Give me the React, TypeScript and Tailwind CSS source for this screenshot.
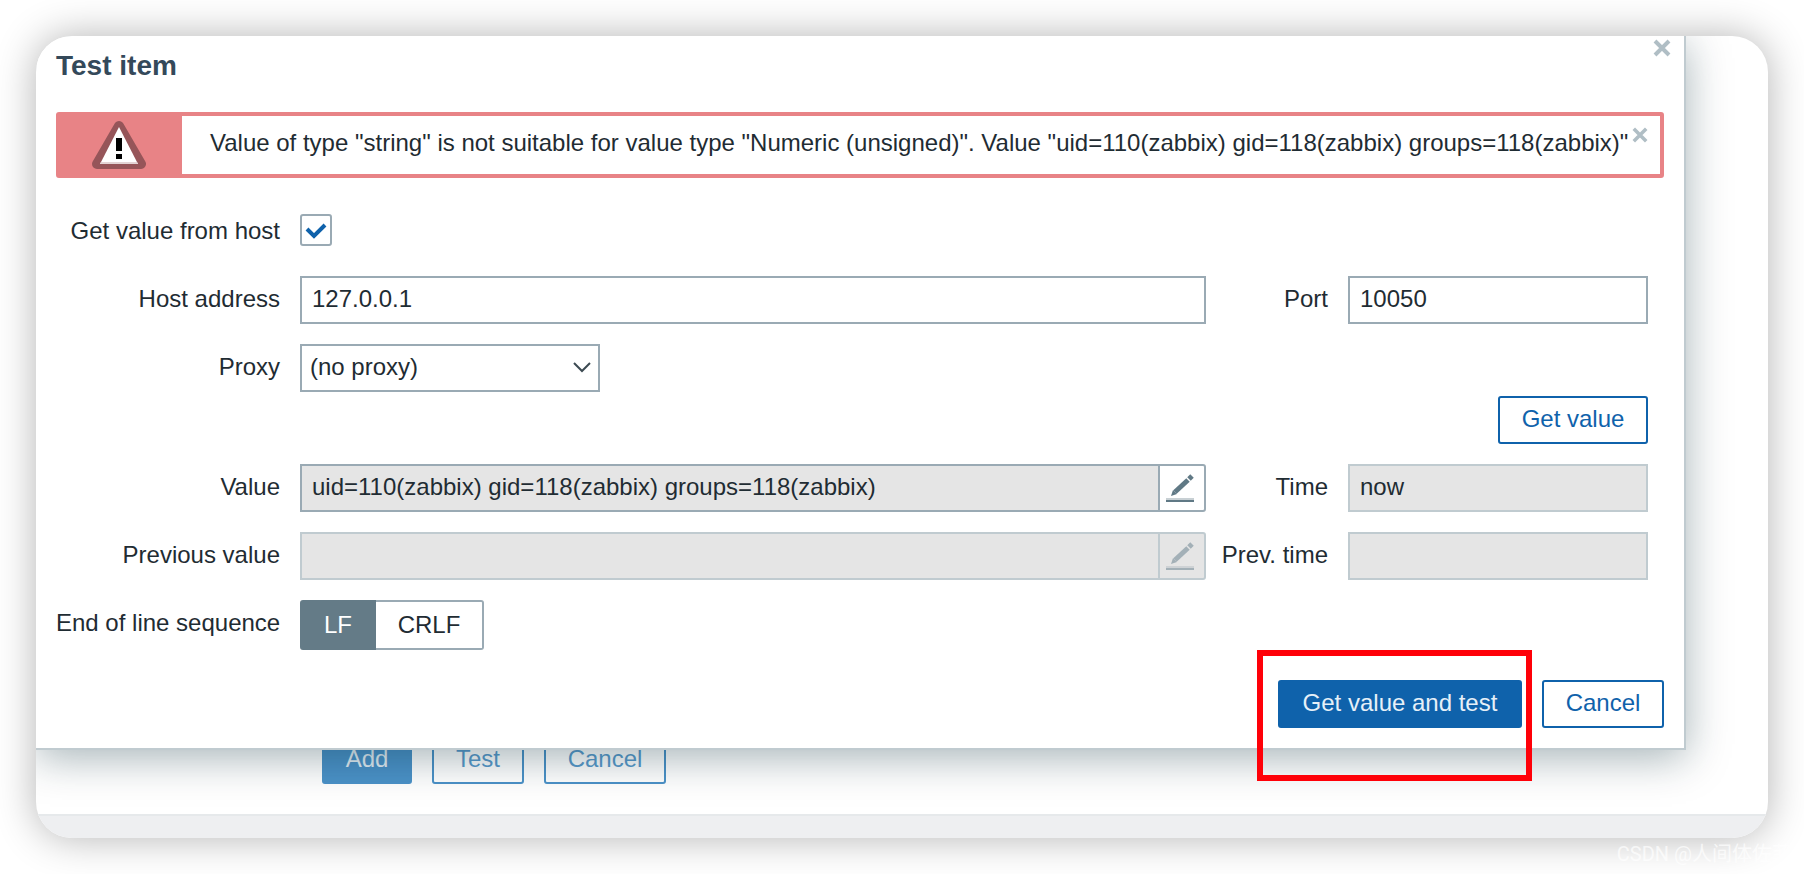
import React from 'react';

const inputBase = 'h-12 w-full min-w-0 border-2 px-[10px] pb-[2px] text-[24px] leading-[28px] outline-none';
const btnBase = 'h-12 rounded-[3px] border-2 pb-[2px] text-center text-[24px] leading-[28px] whitespace-nowrap';

function CloseIcon({ size }: { size: number }) {
  return (
    <svg width={size} height={size} viewBox="0 0 18 18" fill="none" stroke="#b0bec5" strokeWidth="4">
      <path d="M2 2L16 16M16 2L2 16" />
    </svg>
  );
}

function WarningIcon() {
  return (
    <svg width="54" height="50" viewBox="0 0 54 50">
      <path d="M27 6L49 44H5Z" fill="#965559" stroke="#965559" strokeWidth="10" strokeLinejoin="round" />
      <path d="M27 7L46 44H8Z" fill="#fff" />
      <path d="M8 44l1-2h36l1 2z" fill="#e3d3d4" />
      <path d="M24 18h6v13h-6zM24 34h6v5h-6z" fill="#000" />
    </svg>
  );
}

function PencilIcon() {
  return (
    <svg width="28" height="28" viewBox="0 0 28 28" fill="none">
      <path d="M0 24h28v2H0z" fill="currentColor" opacity="0.35" />
      <path d="M0 26h28v2H0z" fill="currentColor" />
      <path d="M9 18L22 6" stroke="currentColor" strokeWidth="5" />
      <path d="M23 5L26 2" stroke="currentColor" strokeWidth="5" />
      <path d="M5 22l2-6 4 4z" fill="currentColor" />
    </svg>
  );
}

function Label({ htmlFor, children }: { htmlFor: string; children: React.ReactNode }) {
  return (
    <label htmlFor={htmlFor} className="h-12 pr-5 text-right leading-[46px] whitespace-nowrap">
      {children}
    </label>
  );
}

export default function App() {
  const [fromHost, setFromHost] = React.useState(true);
  const [eol, setEol] = React.useState('lf');

  return (
    <div className="relative bg-white p-9 font-['Liberation_Sans',Arial,sans-serif] text-[24px] leading-[28px] text-[#1f2c33]">
      <main className="overflow-hidden rounded-[36px] bg-white shadow-[0_0_40px_rgba(0,0,0,0.3)]">
        <section
          role="dialog"
          aria-labelledby="dialog-title"
          className="relative z-10 mr-[82px] border-r-2 border-b-2 border-[#c0cbd0] bg-white px-5 pb-5 shadow-[0_8px_40px_rgba(0,39,51,0.35)]"
        >
          <button type="button" aria-label="Close" className="absolute top-[3px] right-[13px]">
            <CloseIcon size={18} />
          </button>
          <h4 id="dialog-title" className="pt-[14px] text-[28px] leading-[32px] font-bold text-[#34495a]">
            Test item
          </h4>

          <div className="relative mt-[30px] flex h-[66px] rounded-[3px] border-4 border-[#e88386] bg-white">
            <div className="flex w-[122px] shrink-0 items-center justify-center bg-[#e88386] pr-1">
              <WarningIcon />
            </div>
            <p className="pl-7 leading-[54px] whitespace-nowrap">
              Value of type "string" is not suitable for value type "Numeric (unsigned)". Value "uid=110(zabbix)
              gid=118(zabbix) groups=118(zabbix)"
            </p>
            <button type="button" aria-label="Close message" className="absolute top-[11px] right-3">
              <CloseIcon size={16} />
            </button>
          </div>

          <form className="mt-[30px] mr-4 grid grid-cols-[244px_minmax(0,1fr)_142px_300px] gap-y-5">
            <Label htmlFor="from-host">Get value from host</Label>
            <div className="relative col-span-3 mt-[6px] size-8 self-start">
              <input
                id="from-host"
                type="checkbox"
                checked={fromHost}
                onChange={(e) => setFromHost(e.target.checked)}
                className="size-8 appearance-none rounded-[3px] border-2 border-[#9aaab4] bg-white"
              />
              {fromHost && (
                <svg className="pointer-events-none absolute inset-0" width="32" height="32" viewBox="0 0 32 32" fill="none">
                  <path d="M7 15L14 22L25 11" stroke="#0f62ab" strokeWidth="4" />
                </svg>
              )}
            </div>

            <Label htmlFor="host">Host address</Label>
            <input id="host" defaultValue="127.0.0.1" className={`${inputBase} border-[#9aaab4]`} />
            <Label htmlFor="port">Port</Label>
            <input id="port" defaultValue="10050" className={`${inputBase} border-[#9aaab4]`} />

            <Label htmlFor="proxy">Proxy</Label>
            <div className="relative col-span-3 w-[300px]">
              <select
                id="proxy"
                className="h-12 w-full appearance-none border-2 border-[#9aaab4] bg-white px-2 pb-[2px] text-[24px] leading-[28px] outline-none"
              >
                <option>(no proxy)</option>
              </select>
              <svg className="pointer-events-none absolute top-[18px] right-[9px]" width="18" height="12" viewBox="0 0 18 12" fill="none">
                <path d="M1 1L9 9L17 1" stroke="#3c4a52" strokeWidth="2" />
              </svg>
            </div>

            <div className="col-span-4 -mt-4 flex justify-end">
              <button type="button" className={`${btnBase} w-[150px] border-[#0f62ab] bg-white text-[#0f62ab]`}>
                Get value
              </button>
            </div>

            <Label htmlFor="value">Value</Label>
            <div className="flex">
              <input
                id="value"
                readOnly
                defaultValue="uid=110(zabbix) gid=118(zabbix) groups=118(zabbix)"
                className={`${inputBase} border-r-0 border-[#9aaab4] bg-[#e5e5e5]`}
              />
              <button
                type="button"
                aria-label="Edit value"
                className="flex h-12 w-12 shrink-0 items-center justify-center rounded-r-[3px] border-2 border-[#9aaab4] bg-white pr-[4px] text-[#607985]"
              >
                <PencilIcon />
              </button>
            </div>
            <Label htmlFor="time">Time</Label>
            <input id="time" readOnly defaultValue="now" className={`${inputBase} border-[#c0cbd0] bg-[#e5e5e5]`} />

            <Label htmlFor="prev-value">Previous value</Label>
            <div className="flex">
              <input id="prev-value" readOnly className={`${inputBase} border-r-0 border-[#c0cbd0] bg-[#e5e5e5]`} />
              <button
                type="button"
                disabled
                aria-label="Edit previous value"
                className="flex h-12 w-12 shrink-0 items-center justify-center rounded-r-[3px] border-2 border-[#c0cbd0] bg-[#e5e5e5] pr-[4px] text-[#a3b0b7]"
              >
                <PencilIcon />
              </button>
            </div>
            <Label htmlFor="prev-time">Prev. time</Label>
            <input id="prev-time" readOnly className={`${inputBase} border-[#c0cbd0] bg-[#e5e5e5]`} />

            <span id="eol-label" className="h-12 pr-5 text-right leading-[46px] whitespace-nowrap">
              End of line sequence
            </span>
            <div role="radiogroup" aria-labelledby="eol-label" className="col-span-3 flex h-[50px]">
              <label
                className={`flex w-[76px] items-center justify-center rounded-l-[3px] border-2 ${
                  eol === 'lf' ? 'border-[#647b87] bg-[#647b87] text-white' : 'border-[#9aaab4]'
                }`}
              >
                <input type="radio" name="eol" className="sr-only" checked={eol === 'lf'} onChange={() => setEol('lf')} />
                LF
              </label>
              <label
                className={`flex w-[108px] items-center justify-center rounded-r-[3px] border-2 border-l-0 ${
                  eol === 'crlf' ? 'border-[#647b87] bg-[#647b87] text-white' : 'border-[#9aaab4]'
                }`}
              >
                <input type="radio" name="eol" className="sr-only" checked={eol === 'crlf'} onChange={() => setEol('crlf')} />
                CRLF
              </label>
            </div>
          </form>

          <div className="mt-[30px] flex justify-end gap-5">
            <div className="relative">
              <button type="button" className={`${btnBase} w-[244px] border-[#0f62ab] bg-[#0f62ab] text-[#e6f0f8]`}>
                Get value and test
              </button>
              {/* highlight around the main action */}
              <div className="pointer-events-none absolute -top-[30px] -right-[10px] -bottom-[53px] -left-[21px] border-6 border-[#ff0008]" />
            </div>
            <button type="button" className={`${btnBase} w-[122px] border-[#0f62ab] bg-white text-[#0f62ab]`}>
              Cancel
            </button>
          </div>
        </section>

        {/* buttons of the form behind the dialog */}
        <div className="-mt-[14px] flex gap-5 pb-[30px] pl-[286px]">
          <button type="button" className={`${btnBase} w-[90px] border-[#4b92c8] bg-[#4b92c8] text-[#e4eef5]`}>
            Add
          </button>
          <button type="button" className={`${btnBase} w-[92px] border-[#4b92c8] bg-white text-[#5a9bcc]`}>
            Test
          </button>
          <button type="button" className={`${btnBase} w-[122px] border-[#4b92c8] bg-white text-[#5a9bcc]`}>
            Cancel
          </button>
        </div>
        <footer className="h-6 border-t-2 border-[#e6e9eb] bg-[#eeeff1]" />
      </main>
      <span className="absolute right-3 bottom-[6px] font-[Roboto,'Noto_Sans_CJK_SC',sans-serif] text-[20px] leading-[28px] text-white/70">
        CSDN @人间体佐菲
      </span>
    </div>
  );
}
